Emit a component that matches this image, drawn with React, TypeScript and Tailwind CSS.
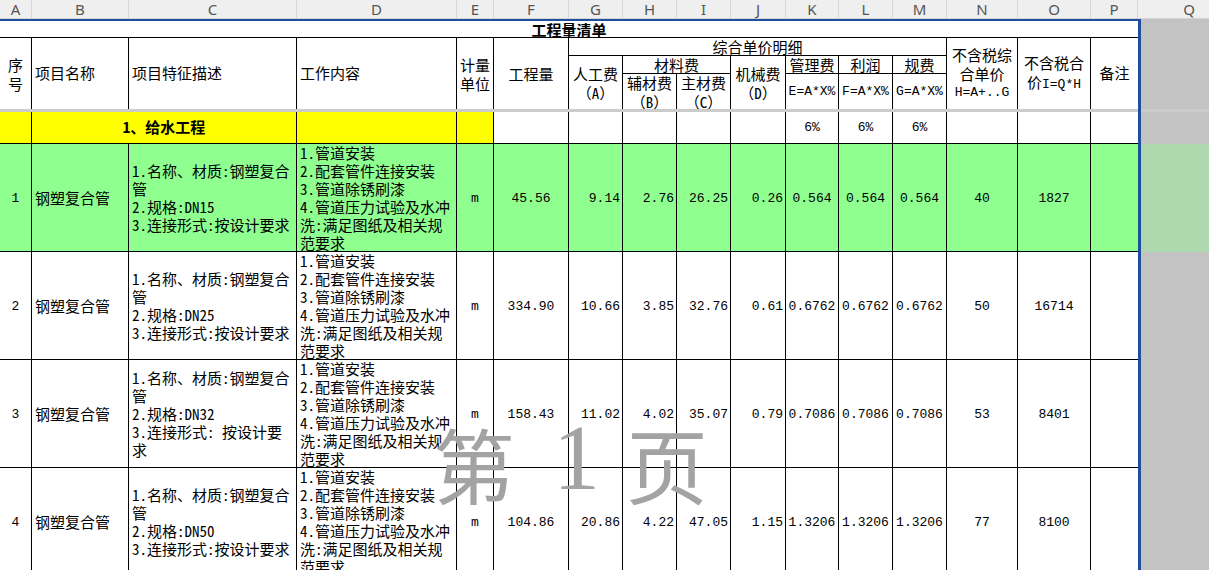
import React from 'react';

const CJK = "font-['Noto_Sans_Mono_CJK_SC','Noto_Sans_CJK_SC',sans-serif]";
const MONO = "font-['Liberation_Mono','Noto_Sans_CJK_SC',monospace] text-[13px]";
const GRID =
  'grid grid-cols-[32px_97px_168px_160px_37px_75px_54px_54px_54px_55px_53px_54px_54px_71px_73px_47px] w-[1138px]';

const letters = ['A', 'B', 'C', 'D', 'E', 'F', 'G', 'H', 'I', 'J', 'K', 'L', 'M', 'N', 'O', 'P'];

type Item = {
  n: string;
  spec: string;
  qty: string;
  a: string;
  b: string;
  c: string;
  d: string;
  e: string;
  price: string;
  total: string;
  green?: boolean;
  connect: string[];
};

const items: Item[] = [
  { n: '1', spec: 'DN15', qty: '45.56', a: '9.14', b: '2.76', c: '26.25', d: '0.26', e: '0.564', price: '40', total: '1827', green: true, connect: ['3.连接形式:按设计要求'] },
  { n: '2', spec: 'DN25', qty: '334.90', a: '10.66', b: '3.85', c: '32.76', d: '0.61', e: '0.6762', price: '50', total: '16714', connect: ['3.连接形式:按设计要求'] },
  { n: '3', spec: 'DN32', qty: '158.43', a: '11.02', b: '4.02', c: '35.07', d: '0.79', e: '0.7086', price: '53', total: '8401', connect: ['3.连接形式: 按设计要', '求'] },
  { n: '4', spec: 'DN50', qty: '104.86', a: '20.86', b: '4.22', c: '47.05', d: '1.15', e: '1.3206', price: '77', total: '8100', connect: ['3.连接形式:按设计要求'] },
];

const work = ['1.管道安装', '2.配套管件连接安装', '3.管道除锈刷漆', '4.管道压力试验及水冲', '洗:满足图纸及相关规', '范要求'];

// one band of the sheet: table part, blue print border, column Q
function SheetRow({ children, className, q }: { children: React.ReactNode; className: string; q: string }) {
  return (
    <div className="flex">
      <div className={`${GRID} ${className}`}>{children}</div>
      <div className="w-[3px] bg-[#1f4e9f]" />
      <div className={`w-[68px] ${q}`} />
    </div>
  );
}

function DataRow({ r }: { r: Item }) {
  const cell = 'border-r border-b border-black flex items-center pt-[2px]';
  return (
    <SheetRow className={`h-[108px] ${r.green ? 'bg-[#8fff8f]' : 'bg-white'}`} q={r.green ? 'bg-[#aed8ae]' : 'bg-[#c3c3c3]'}>
      <div className={`${cell} justify-center`}>
        <span className={MONO}>{r.n}</span>
      </div>
      <div className={`${cell} pl-[3px]`}>钢塑复合管</div>
      <div className="border-r border-b border-black flex flex-col justify-center pl-[3px] leading-[18px] whitespace-nowrap overflow-hidden">
        <span>1.名称、材质:钢塑复合</span>
        <span>管</span>
        <span>2.规格:{r.spec}</span>
        {r.connect.map((l) => (
          <span key={l}>{l}</span>
        ))}
      </div>
      <div className="border-r border-b border-black flex flex-col justify-start pl-[3px] leading-[18px] whitespace-nowrap overflow-hidden">
        {work.map((l) => (
          <span key={l}>{l}</span>
        ))}
      </div>
      <div className={`${cell} justify-center`}>
        <span className={MONO}>m</span>
      </div>
      <div className={`${cell} justify-center ${MONO}`}>{r.qty}</div>
      <div className={`${cell} justify-end pr-[2px] ${MONO}`}>{r.a}</div>
      <div className={`${cell} justify-end pr-[2px] ${MONO}`}>{r.b}</div>
      <div className={`${cell} justify-end pr-[2px] ${MONO}`}>{r.c}</div>
      <div className={`${cell} justify-end pr-[2px] ${MONO}`}>{r.d}</div>
      <div className={`${cell} justify-center ${MONO}`}>{r.e}</div>
      <div className={`${cell} justify-center ${MONO}`}>{r.e}</div>
      <div className={`${cell} justify-center ${MONO}`}>{r.e}</div>
      <div className={`${cell} justify-center ${MONO}`}>{r.price}</div>
      <div className={`${cell} justify-center ${MONO}`}>{r.total}</div>
      <div className="border-b border-black" />
    </SheetRow>
  );
}

export default function App() {
  const hd = 'border-r border-black flex flex-col items-center justify-center leading-[19px]';
  return (
    <div className={`relative w-[1209px] h-[570px] overflow-hidden bg-white text-black text-[15px] ${CJK}`}>
      {/* column letters */}
      <div className="flex h-[19px] bg-[#efefef] border-b border-[#d4d4d4] font-['Noto_Sans',sans-serif] text-[15px] text-[#555]">
        <div className={GRID}>
          {letters.map((l) => (
            <div key={l} className="border-r border-[#d6d6d6] flex items-center justify-center leading-none">
              {l}
            </div>
          ))}
        </div>
        <div className="w-[71px] flex items-center justify-end pr-[14px] leading-none">Q</div>
      </div>

      {/* print area top edge */}
      <div className="flex">
        <div className="w-[1141px] h-[2px] bg-[#1f4e9f]" />
        <div className="w-[68px] bg-[#c3c3c3]" />
      </div>

      {/* title */}
      <div className="flex">
        <div className="w-[1138px] h-[17px] border-b border-black flex items-center justify-center font-bold leading-none">
          工程量清单
        </div>
        <div className="w-[3px] bg-[#1f4e9f]" />
        <div className="w-[68px] bg-[#c3c3c3]" />
      </div>

      {/* header */}
      <SheetRow className="grid-rows-[18px_18px_35px] bg-white" q="bg-[#c3c3c3]">
        <div className={`row-span-3 ${hd}`}>
          <span>序</span>
          <span>号</span>
        </div>
        <div className="row-span-3 border-r border-black flex items-center pl-[3px]">项目名称</div>
        <div className="row-span-3 border-r border-black flex items-center pl-[3px]">项目特征描述</div>
        <div className="row-span-3 border-r border-black flex items-center pl-[3px]">工作内容</div>
        <div className={`row-span-3 ${hd}`}>
          <span>计量</span>
          <span>单位</span>
        </div>
        <div className={`row-span-3 ${hd}`}>工程量</div>
        <div className="col-span-7 border-r border-b border-black flex items-center justify-center leading-none">综合单价明细</div>
        <div className={`row-span-3 ${hd} leading-[18px]`}>
          <span>不含税综</span>
          <span>合单价</span>
          <span className={MONO}>H=A+..G</span>
        </div>
        <div className={`row-span-3 ${hd}`}>
          <span>不含税合</span>
          <span>
            价<span className={MONO}>I=Q*H</span>
          </span>
        </div>
        <div className="row-span-3 flex items-center justify-center">备注</div>

        <div className={`row-span-2 ${hd}`}>
          <span>人工费</span>
          <span>（A）</span>
        </div>
        <div className="col-span-2 border-r border-b border-black flex items-center justify-center leading-none">材料费</div>
        <div className={`row-span-2 ${hd}`}>
          <span>机械费</span>
          <span>（D）</span>
        </div>
        <div className="border-r border-b border-black flex items-center justify-center leading-none">管理费</div>
        <div className="border-r border-b border-black flex items-center justify-center leading-none">利润</div>
        <div className="border-r border-b border-black flex items-center justify-center leading-none">规费</div>

        <div className={hd}>
          <span>辅材费</span>
          <span>（B）</span>
        </div>
        <div className={hd}>
          <span>主材费</span>
          <span>（C）</span>
        </div>
        <div className={`${hd} ${MONO}`}>E=A*X%</div>
        <div className={`${hd} ${MONO}`}>F=A*X%</div>
        <div className={`${hd} ${MONO}`}>G=A*X%</div>
      </SheetRow>

      {/* frozen pane split */}
      <div className="flex h-[3px]">
        <div className="w-[1138px] bg-[#cbcbcb]" />
        <div className="w-[3px] bg-[#1f4e9f]" />
        <div className="w-[68px] bg-[#cbcbcb]" />
      </div>

      {/* section row */}
      <SheetRow className="h-[32px] bg-white" q="bg-[#c3c3c3]">
        <div className="bg-[#ffff00] border-r border-b border-black" />
        <div className="col-span-2 bg-[#ffff00] border-r border-b border-black flex items-center justify-center font-bold">
          1、给水工程
        </div>
        <div className="bg-[#ffff00] border-r border-b border-black" />
        <div className="bg-[#ffff00] border-r border-b border-black" />
        <div className="border-r border-b border-black" />
        <div className="border-r border-b border-black" />
        <div className="border-r border-b border-black" />
        <div className="border-r border-b border-black" />
        <div className="border-r border-b border-black" />
        <div className={`border-r border-b border-black flex items-center justify-center ${MONO}`}>6%</div>
        <div className={`border-r border-b border-black flex items-center justify-center ${MONO}`}>6%</div>
        <div className={`border-r border-b border-black flex items-center justify-center ${MONO}`}>6%</div>
        <div className="border-r border-b border-black" />
        <div className="border-r border-b border-black" />
        <div className="border-b border-black" />
      </SheetRow>

      {items.map((r) => (
        <DataRow key={r.n} r={r} />
      ))}

      {/* page watermark */}
      <div className="absolute left-[433px] top-[410px] flex items-end text-[82px] leading-none text-[#a3a3a3] pointer-events-none">
        <span>第</span>
        <span className="ml-[38px] font-['Liberation_Serif',serif] text-[94px] leading-none">1</span>
        <span className="ml-[26px]">页</span>
      </div>
    </div>
  );
}
